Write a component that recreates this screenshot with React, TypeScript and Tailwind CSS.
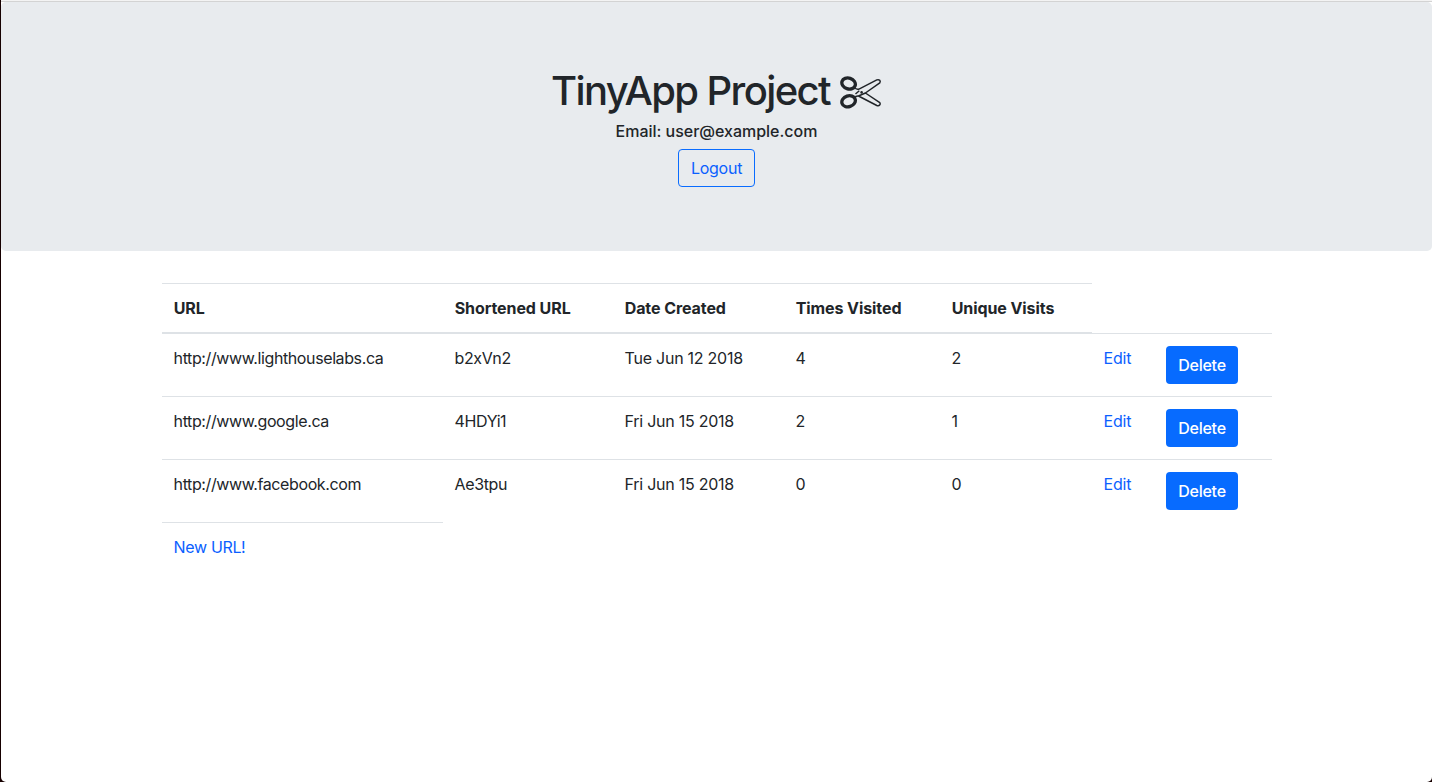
const COLS = 'grid grid-cols-[281px_170px_171px_156px_152px_62px_118px]';

const urls = [
  { url: 'http://www.lighthouselabs.ca', short: 'b2xVn2', date: 'Tue Jun 12 2018', visits: '4', unique: '2' },
  { url: 'http://www.google.ca', short: '4HDYi1', date: 'Fri Jun 15 2018', visits: '2', unique: '1' },
  { url: 'http://www.facebook.com', short: 'Ae3tpu', date: 'Fri Jun 15 2018', visits: '0', unique: '0' },
];

const headings = ['URL', 'Shortened URL', 'Date Created', 'Times Visited', 'Unique Visits'];

function Scissors() {
  return (
    <svg width="42" height="34" viewBox="0 0 42 34" fill="none" stroke="currentColor" className="ml-[10px] mt-1">
      <ellipse cx="8.6" cy="7.5" rx="6.9" ry="5.4" transform="rotate(18 8.6 7.5)" strokeWidth="3.3" />
      <ellipse cx="8.6" cy="25.3" rx="6.9" ry="5.4" transform="rotate(-18 8.6 25.3)" strokeWidth="3.3" />
      <path
        d="M14.8 11.5c1 2 2.4 1.6 3.7 1.8L36.8 3.9c2.6-.8 4.2 1 3 2.9L25.4 17l14.4 9.6c1.2 1.9-.4 3.7-3 2.9L18.5 20c-1.3.2-2.7-.2-3.7 1.8M15.5 18l3.8-3.2M18.5 20l6.9-3"
        strokeWidth="1.5"
        strokeLinejoin="round"
      />
      <circle cx="21.6" cy="16.4" r="1.3" fill="currentColor" stroke="none" />
    </svg>
  );
}

export default function App() {
  return (
    <div className="h-[782px] bg-[#160000]">
      <div className="ml-px flex h-full flex-col overflow-hidden rounded-b-[5px] bg-white font-['Inter',sans-serif] text-base leading-6 tracking-[-0.25px] text-[#212529]">
        <div className="h-0.5 shrink-0 border-b border-[#d3d3d3] bg-[#f3f3f3]" />
        <header className="flex h-[249px] shrink-0 flex-col items-center rounded-[5px] bg-[#e8ebee] pt-16">
          <h1 className="flex h-[49px] items-center text-[40px] font-medium leading-[48px] tracking-[-1.6px]">
            TinyApp Project
            <Scissors />
          </h1>
          <p className="mt-1 h-6 font-medium tracking-[-0.02px]">Email: user@example.com</p>
          <button className="mt-[6px] h-[38px] w-[77px] rounded border border-[#0a6cff] text-[#0a60ff]">Logout</button>
        </header>

        <main className="ml-[161px] mt-8 w-[1110px]">
          <div className={COLS}>
            {headings.map((h) => (
              <div key={h} className="h-[50px] border-y border-[#dee2e6] pl-[11.7px] pt-3 font-bold tracking-[-0.08px]">
                {h}
              </div>
            ))}
          </div>
          {urls.map((row) => (
            <div key={row.short} className={`${COLS} h-[63px] border-t border-[#dee2e6] pt-3`}>
              <div className="pl-[11.6px] tracking-[-0.39px]">{row.url}</div>
              <div className="pl-[11.6px] tracking-[-0.4px]">{row.short}</div>
              <div className="pl-[11.6px]">{row.date}</div>
              <div className="pl-[11.6px]">{row.visits}</div>
              <div className="pl-[11.6px]">{row.unique}</div>
              <a className="pl-[11.6px] text-[#0a60ff]">Edit</a>
              <button className="ml-3 h-[38px] w-[72px] rounded bg-[#076bff] font-medium text-white">Delete</button>
            </div>
          ))}
          <div className="w-[281px] border-t border-[#dee2e6] pl-[11.6px] pt-3">
            <a className="tracking-[-0.35px] text-[#0a60ff]">New URL!</a>
          </div>
        </main>
      </div>
    </div>
  );
}
